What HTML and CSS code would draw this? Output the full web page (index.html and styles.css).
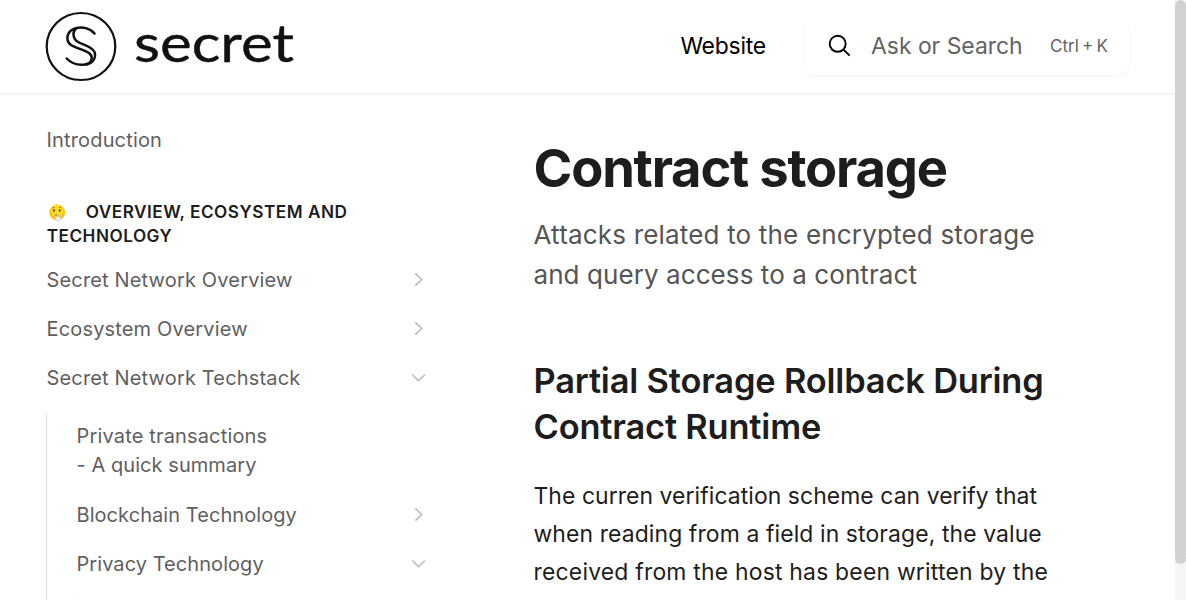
FILE: index.html
```
<!DOCTYPE html>
<html lang="en">
<head>
<meta charset="utf-8">
<title>Contract storage</title>
<link rel="stylesheet" href="styles.css">
</head>
<body>
<div class="page">
  <div class="view">
    <header class="header">
      <svg class="logo" width="256" height="72" viewBox="0 0 256 72" aria-label="secret">
        <ellipse cx="36" cy="35.5" rx="34.3" ry="33.5" fill="none" stroke="#111" stroke-width="2.2"/>
        <g fill="none" stroke="#111" stroke-width="2.5" stroke-linecap="round">
          <path d="M49.500 22.500C45 17 37 15.500 31.500 17C22 19 19.500 29 26 34C31 37.500 39 38 44.500 42.500C49 46.500 46 53 40 53.500C33 54.500 26 52 21.700 47.500"/>
          <path d="M31 17.500C26.500 22 28.500 29 34 31.500C39 34 47 35.500 49.500 41C51.500 47 48 52 41 53.500"/>
        </g>
        <text class="wordmark" x="89" y="50.500" textLength="160" lengthAdjust="spacingAndGlyphs">secret</text>
      </svg>
      <a class="website">Website</a>
      <div class="search">
        <svg class="search-icon" width="24" height="24" viewBox="0 0 24 24" fill="none" stroke="#000" stroke-width="1.9"><circle cx="10.700" cy="9.800" r="8"/><path d="M16.500 15.600l6.200 6"/></svg>
        <span class="search-label">Ask or Search</span>
        <span class="shortcut">Ctrl + K</span>
      </div>
    </header>
    <div class="body">
      <nav class="sidebar">
        <a class="item intro"><span>Introduction</span></a>
        <h2 class="group"><svg class="emoji" width="18" height="18" viewBox="0 0 18 18"><circle cx="8.200" cy="8.500" r="7.900" fill="#fcc21b"/><circle cx="8" cy="6.500" r="6" fill="#ffdc22"/><path d="M3.300 4.200q1-1 2.200-.7M10.200 3.500q1.300-.3 2.200.7" fill="none" stroke="#6d4c20" stroke-width=".8"/><ellipse cx="5" cy="6.500" rx=".9" ry="1.300" fill="#4b3410"/><ellipse cx="10.700" cy="6.500" rx=".9" ry="1.300" fill="#4b3410"/><path d="M6.300 11h3.500" stroke="#694414"/><path d="M8.100 9.300q1-.6 1.200.8v2.400l2.500 1q.5 2-1.500 3.500H7.600Q5.800 15 6.300 12.500l1.800.5z" fill="#eceff1" stroke="#b5bcc0" stroke-width=".5"/></svg><span>OVERVIEW, ECOSYSTEM AND TECHNOLOGY</span></h2>
        <a class="item"><span>Secret Network Overview</span><svg class="chev" viewBox="0 0 16 16"><path d="M5 2.200 11 8l-6 5.800"/></svg></a>
        <a class="item"><span>Ecosystem Overview</span><svg class="chev" viewBox="0 0 16 16"><path d="M5 2.200 11 8l-6 5.800"/></svg></a>
        <a class="item"><span>Secret Network Techstack</span><svg class="chev" viewBox="0 0 16 16"><path d="M2 5.200 8 11l6-5.800"/></svg></a>
        <div class="nested">
          <a class="item two"><span>Private transactions<br><span class="tight">- A quick summary</span></span></a>
          <a class="item tight"><span>Blockchain Technology</span><svg class="chev" viewBox="0 0 16 16"><path d="M5 2.200 11 8l-6 5.800"/></svg></a>
          <a class="item tight"><span>Privacy Technology</span><svg class="chev" viewBox="0 0 16 16"><path d="M2 5.200 8 11l6-5.800"/></svg></a>
          <div class="nested deep"></div>
        </div>
      </nav>
      <main class="content">
        <h1>Contract storage</h1>
        <p class="lead">Attacks related to the encrypted storage<br><span class="snug">and query access to a contract</span></p>
        <h2 class="heading">Partial Storage Rollback During<br>Contract Runtime</h2>
        <p class="text"><span class="snug">The curren verification scheme can verify that</span><br>when reading from a field in storage, the value<br><span class="loose">received from the host has been written by the</span></p>
      </main>
    </div>
  </div>
  <div class="scrollbar"><div class="thumb"></div></div>
</div>
</body>
</html>
```
FILE: styles.css
```
* { box-sizing: border-box; }
body { margin: 0; background: #fff; font-family: Inter, "Liberation Sans", sans-serif; color: #1d1d1d; overflow: hidden; }
h1, h2, p { margin: 0; }
.page { display: flex; width: 1186px; height: 600px; overflow: hidden; }
.view { flex: 1; min-width: 0; }
.header { display: flex; align-items: center; height: 95px; padding: 0 46px 2px 45px; border-bottom: 2px solid #f5f5f5; }
.logo { display: block; position: relative; top: 1px; overflow: visible; }
.wordmark { font-family: Lato, sans-serif; font-size: 53px; fill: #111; stroke: #111; stroke-width: .4px; }
.website { margin-left: auto; font-size: 22.9px; letter-spacing: -.2px; color: #000; }
.search { display: flex; align-items: center; width: 325px; height: 58px; margin-left: 38px; padding: 0 21px 0 23px; border-radius: 12px; box-shadow: 0 1px 3px rgba(0,0,0,.06); }
.search-label { margin-left: 20px; font-size: 22.9px; color: #636363; }
.shortcut { margin-left: auto; padding-top: 1px; font-size: 17px; word-spacing: -1.5px; color: #636363; }
.body { display: flex; }
.sidebar { width: 390px; margin-left: 46px; padding-top: 21px; flex: none; }
.item { display: flex; justify-content: space-between; align-items: center; height: 49px; padding-right: 9px; font-size: 20px; line-height: 29px; letter-spacing: .16px; color: #5f5f5f; }
.item > span { padding-left: .5px; }
.tight { letter-spacing: .06px; }
.group { margin: 35px 0 8px; font-size: 17.2px; line-height: 24px; font-weight: 600; letter-spacing: .5px; width: 330px; padding-left: .7px; }
.emoji { display: inline-block; vertical-align: -4px; margin: 0 19px 0 2px; }
.chev { width: 17px; height: 17px; fill: none; stroke: #bdbdbd; stroke-width: 1.5; position: relative; top: -1px; }
.nested { margin-top: 10px; border-left: 1px solid #dedede; padding-left: 29px; }
.nested .two { height: 77px; padding-bottom: 1px; margin-bottom: 1px; }
.deep { height: 40px; }
.content { margin-left: 97.5px; padding-top: 42px; white-space: nowrap; }
h1 { font-size: 52.5px; line-height: 62px; font-weight: 700; letter-spacing: -1.2px; }
.lead { margin-top: 16px; font-size: 26px; line-height: 40px; letter-spacing: .18px; color: #555; }
.heading { margin-top: 63px; font-size: 34.4px; line-height: 46px; font-weight: 600; letter-spacing: -.17px; }
.text { margin-top: 27px; font-size: 22.9px; line-height: 38px; letter-spacing: .12px; }
.snug { letter-spacing: .08px; }
.loose { letter-spacing: .22px; }
.scrollbar { width: 11px; background: #f6f6f6; }
.thumb { height: 564px; border-radius: 6px; background: #d2d2d2; }
```
